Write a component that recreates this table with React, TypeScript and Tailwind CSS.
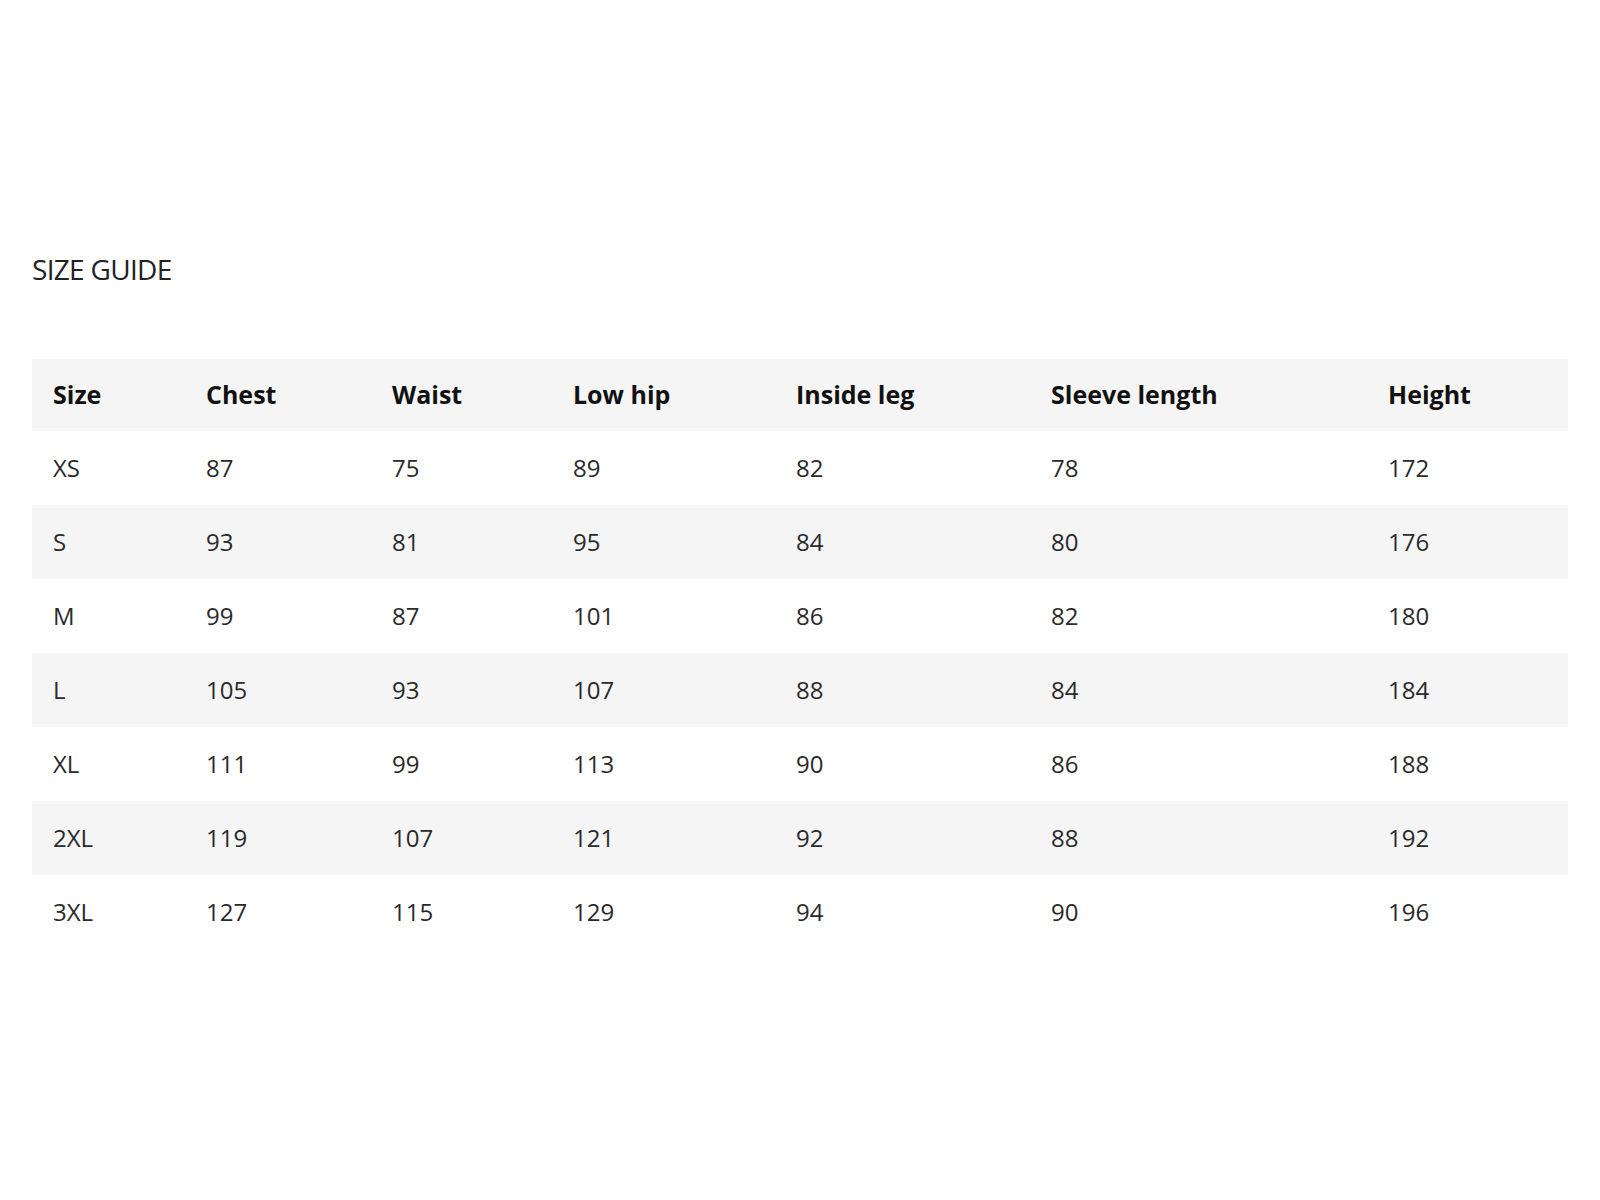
const columns = [
  { label: "Size", width: "w-[153px]" },
  { label: "Chest", width: "w-[186px]" },
  { label: "Waist", width: "w-[181px]" },
  { label: "Low hip", width: "w-[223px]" },
  { label: "Inside leg", width: "w-[255px]" },
  { label: "Sleeve length", width: "w-[337px]" },
  { label: "Height", width: "w-[201px]" },
];

const rows = [
  ["XS", "87", "75", "89", "82", "78", "172"],
  ["S", "93", "81", "95", "84", "80", "176"],
  ["M", "99", "87", "101", "86", "82", "180"],
  ["L", "105", "93", "107", "88", "84", "184"],
  ["XL", "111", "99", "113", "90", "86", "188"],
  ["2XL", "119", "107", "121", "92", "88", "192"],
  ["3XL", "127", "115", "129", "94", "90", "196"],
];

export default function App() {
  return (
    <div className="min-h-[1200px] w-[1600px] bg-white px-8 pt-[251px] font-['Open_Sans',sans-serif]">
      <h1 className="text-[28px] leading-[36px] tracking-[-0.025em] text-[#222]">
        SIZE GUIDE
      </h1>

      <table className="mt-[72px] w-[1536px] table-fixed border-collapse">
        <thead>
          <tr className="h-[72px] bg-[#f5f5f5]">
            {columns.map((col) => (
              <th
                key={col.label}
                className={`${col.width} pl-[21px] text-left text-[25px] font-bold text-[#111]`}
              >
                {col.label}
              </th>
            ))}
          </tr>
        </thead>
        <tbody>
          {rows.map((row, i) => (
            <tr
              key={row[0]}
              className={i % 2 === 1 ? "h-[74px] bg-[#f5f5f5]" : "h-[74px] bg-white"}
            >
              {row.map((cell, j) => (
                <td key={j} className="pl-[21px] text-[24px] text-[#2a2a2a]">
                  {cell}
                </td>
              ))}
            </tr>
          ))}
        </tbody>
      </table>
    </div>
  );
}
